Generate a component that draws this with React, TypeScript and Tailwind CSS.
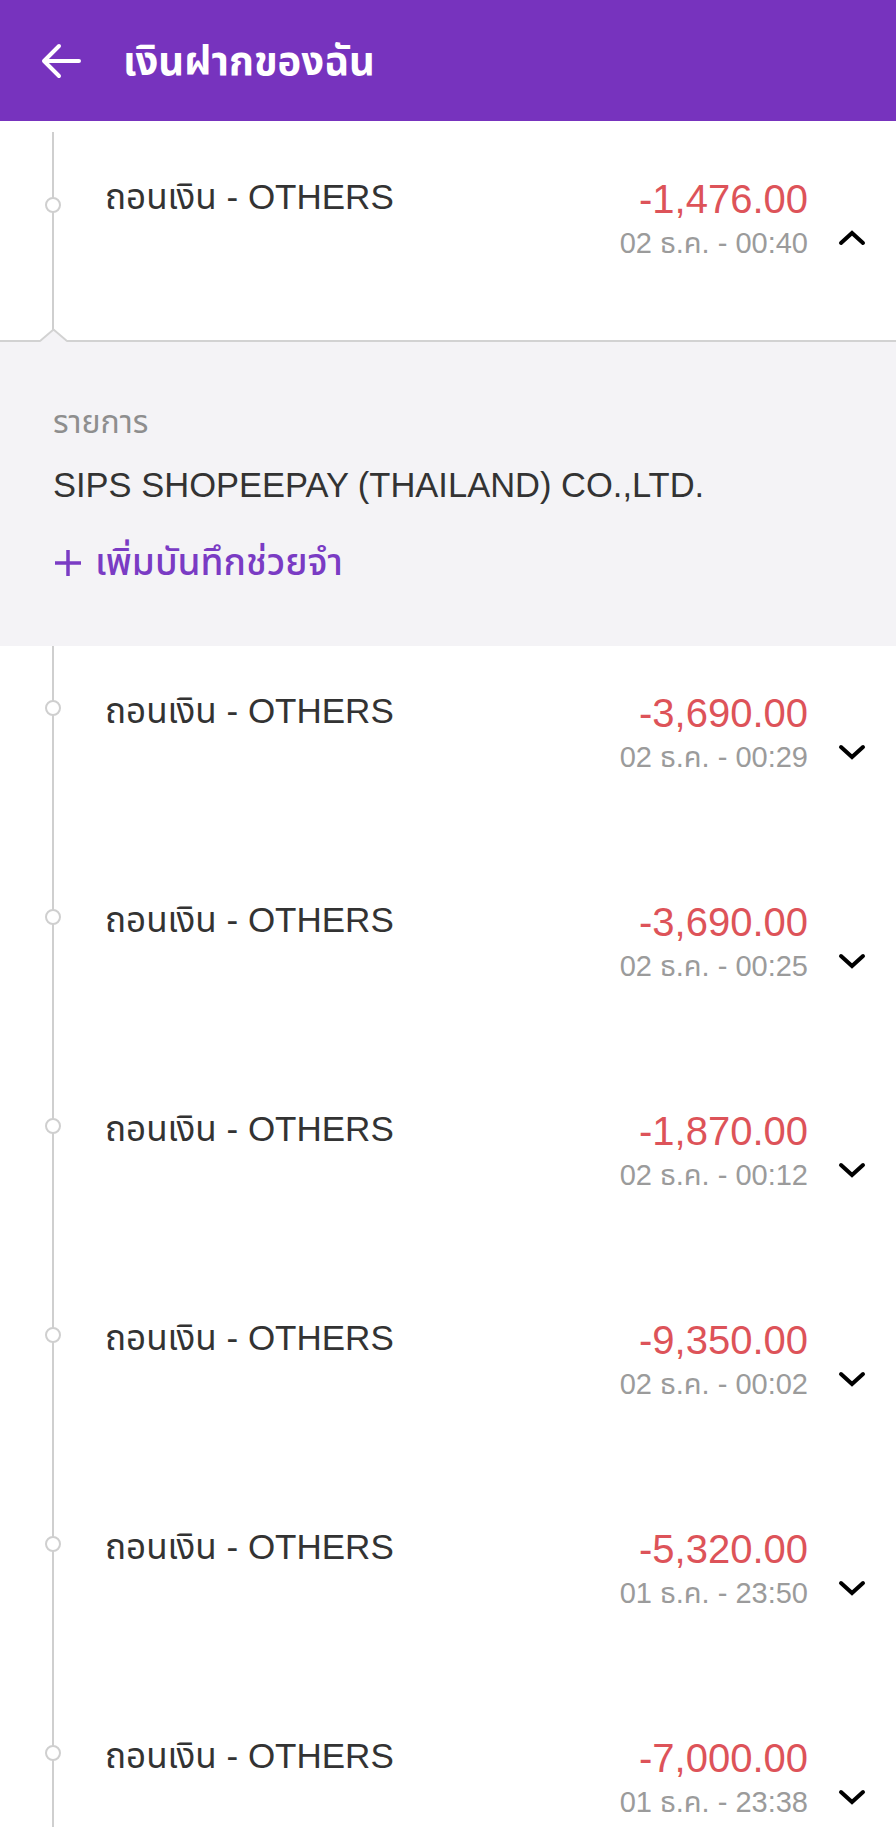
import React from 'react';

const rows = [
  { amount: '-1,476.00', date: '02 ธ.ค. - 00:40', open: true },
  { amount: '-3,690.00', date: '02 ธ.ค. - 00:29' },
  { amount: '-3,690.00', date: '02 ธ.ค. - 00:25' },
  { amount: '-1,870.00', date: '02 ธ.ค. - 00:12' },
  { amount: '-9,350.00', date: '02 ธ.ค. - 00:02' },
  { amount: '-5,320.00', date: '01 ธ.ค. - 23:50' },
  { amount: '-7,000.00', date: '01 ธ.ค. - 23:38' },
];

const Chevron = ({ up }: { up?: boolean }) => (
  <svg width="28" height="16" viewBox="0 0 28 16" className={up ? 'rotate-180' : ''}>
    <path d="M3 3 L14 13 L25 3" fill="none" stroke="#000" strokeWidth="4" strokeLinecap="round" />
  </svg>
);

const Row = ({ amount, date, open, first }: { amount: string; date: string; open?: boolean; first?: boolean }) => (
  <div className={`relative flex ${first ? 'h-[219px] pt-[11px]' : 'h-[209px]'}`}>
    <div className="relative w-[105px] shrink-0">
      <div className="absolute left-[52px] top-0 bottom-0 w-[2px] bg-[#cfcfcf]" />
      <div
        className={`absolute left-[45px] w-[16px] h-[16px] rounded-full border-2 border-[#cfcfcf] bg-white ${first ? 'top-[65px]' : 'top-[54px]'}`}
      />
    </div>
    <div className="flex flex-1 items-start pt-[45px]">
      <div className="flex-1 text-[35px] leading-[40px] text-[#333333]">ถอนเงิน - OTHERS</div>
      <div className="text-right">
        <div className="text-[40px] leading-[44px] text-[#dd5359]">{amount}</div>
        <div className="mt-[6px] text-[29px] leading-[32px] text-[#9b9b9b]">{date}</div>
      </div>
      <div className="w-[88px] flex justify-center pt-[53px]">
        <Chevron up={open} />
      </div>
    </div>
  </div>
);

export default function App() {
  return (
    <div className="w-[896px] h-[1827px] overflow-hidden bg-white font-['Liberation_Sans','Noto_Sans_Thai','Noto_Sans',sans-serif]">
      <div className="h-[121px] bg-[#7733be] flex items-center">
        <svg width="40" height="38" viewBox="0 0 40 38" className="ml-[41px]">
          <path d="M38 19 H4 M18 4 L3 19 L18 34" fill="none" stroke="#fff" strokeWidth="4" strokeLinecap="round" strokeLinejoin="round" />
        </svg>
        <h1 className="ml-[42px] text-[40px] font-bold text-white">เงินฝากของฉัน</h1>
      </div>

      <Row {...rows[0]} first />

      <div className="relative bg-[#f4f3f6] border-t-2 border-[#d2d2d2] h-[306px] pl-[53px] pt-[62px]">
        <svg width="27" height="14" viewBox="0 0 27 14" className="absolute left-[40px] -top-[14px]">
          <path d="M0 14 L13.5 1.5 L27 14 Z" fill="#f4f3f6" />
          <path d="M0 13 L13.5 1.5 L27 13" fill="none" stroke="#d2d2d2" strokeWidth="2" />
        </svg>
        <div className="text-[32px] leading-[36px] text-[#8e8e8e]">รายการ</div>
        <div className="mt-[25px] text-[34.5px] leading-[40px] text-[#333333]">SIPS SHOPEEPAY (THAILAND) CO.,LTD.</div>
        <div className="mt-[37px] flex items-center gap-[12px] text-[37px] leading-[42px] font-medium text-[#7a3bc4]">
          <svg width="30" height="30" viewBox="0 0 30 30">
            <path d="M15 2 V28 M2 15 H28" stroke="#7a3bc4" strokeWidth="3.5" />
          </svg>
          <span>เพิ่มบันทึกช่วยจำ</span>
        </div>
      </div>

      {rows.slice(1).map((r, i) => (
        <Row key={i} {...r} />
      ))}
    </div>
  );
}
